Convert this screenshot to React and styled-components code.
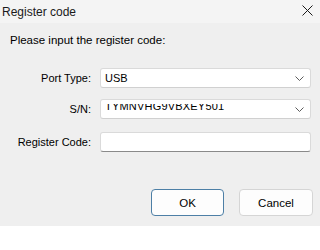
import styled, { createGlobalStyle } from 'styled-components'

const GlobalStyle = createGlobalStyle`
  html, body {
    margin: 0;
    padding: 0;
    background: #ffffff;
  }
  body {
    font-family: "Liberation Sans", Arial, sans-serif;
    color: #000;
  }
`

const Dialog = styled.div`
  display: flex;
  flex-direction: column;
  width: 320px;
  height: 226px;
  background: #efefef;
`

const TitleBar = styled.div`
  display: flex;
  align-items: center;
  justify-content: space-between;
  height: 23px;
  padding: 0 6px 0 2px;
  background: #f4f4f4;
  font-size: 12px;
  color: #1a1a1a;
`

const CloseButton = styled.div`
  display: flex;
  align-items: center;
  justify-content: center;
  width: 14px;
  height: 14px;
  margin-top: -3px;
`

const Body = styled.div`
  display: flex;
  flex-direction: column;
  flex: 1;
  padding: 0 9px 0 10px;
`

const Intro = styled.div`
  margin-top: 10px;
  font-size: 11.5px;
  line-height: 14px;
`

const Form = styled.div`
  display: grid;
  grid-template-columns: 81px 211px;
  column-gap: 9px;
  row-gap: 11px;
  margin-top: 21px;
`

const Label = styled.div`
  display: flex;
  align-items: center;
  justify-content: flex-end;
  height: 20px;
  font-size: 11px;
  margin-top: ${(p) => p.$offset || 0}px;
`

const Field = styled.div`
  display: flex;
  align-items: center;
  box-sizing: border-box;
  height: 20px;
  padding: 0 0 0 4px;
  background: #ffffff;
  border: 1px solid #dadada;
  border-bottom-color: ${(p) => (p.$edit ? '#8a8a8a' : '#d0d0d0')};
  border-radius: 3px;
  font-size: 11px;
  margin-top: ${(p) => p.$offset || 0}px;
`

const Value = styled.span`
  flex: 1;
`

// the serial number is drawn half-hidden in the original dialog
const Clip = styled.span`
  flex: 1;
  align-self: flex-start;
  height: 6px;
  margin-top: 4px;
  overflow: hidden;
  line-height: 11px;
`

const ClipText = styled.span`
  display: block;
  margin-top: -3.5px;
  letter-spacing: 0.2px;
`

const Chevron = styled.svg`
  width: 9px;
  height: 5px;
  margin-right: 6px;
  flex: none;
`

const Buttons = styled.div`
  display: flex;
  justify-content: flex-end;
  gap: 15px;
  margin-top: 37px;
  margin-right: -2px;
`

const Button = styled.div`
  display: flex;
  align-items: center;
  justify-content: center;
  box-sizing: border-box;
  width: ${(p) => p.$width}px;
  height: 27px;
  background: #fdfdfd;
  border: ${(p) => (p.$primary ? '1.5px solid #4d7fa6' : '1px solid #d5d5d5')};
  border-radius: 4px;
  font-size: 11.5px;
`

const ChevronIcon = () => (
  <Chevron viewBox="0 0 9 5">
    <path d="M0.5 0.5 L4.5 4.5 L8.5 0.5" fill="none" stroke="#5c5c5c" strokeWidth="1" />
  </Chevron>
)

export default function App() {
  return (
    <>
      <GlobalStyle />
      <Dialog>
        <TitleBar>
          <span>Register code</span>
          <CloseButton>
            <svg width="11" height="11" viewBox="0 0 11 11">
              <path d="M0.5 0.5 L10.5 10.5 M10.5 0.5 L0.5 10.5" stroke="#1a1a1a" strokeWidth="1" />
            </svg>
          </CloseButton>
        </TitleBar>
        <Body>
          <Intro>Please input the register code:</Intro>
          <Form>
            <Label>Port Type:</Label>
            <Field>
              <Value>USB</Value>
              <ChevronIcon />
            </Field>
            <Label>S/N:</Label>
            <Field>
              <Clip>
                <ClipText>TYMNVHG9VBXEY501</ClipText>
              </Clip>
              <ChevronIcon />
            </Field>
            <Label $offset={2}>Register Code:</Label>
            <Field $edit $offset={2} />
          </Form>
          <Buttons>
            <Button $primary $width={73}>OK</Button>
            <Button $width={74}>Cancel</Button>
          </Buttons>
        </Body>
      </Dialog>
    </>
  )
}
